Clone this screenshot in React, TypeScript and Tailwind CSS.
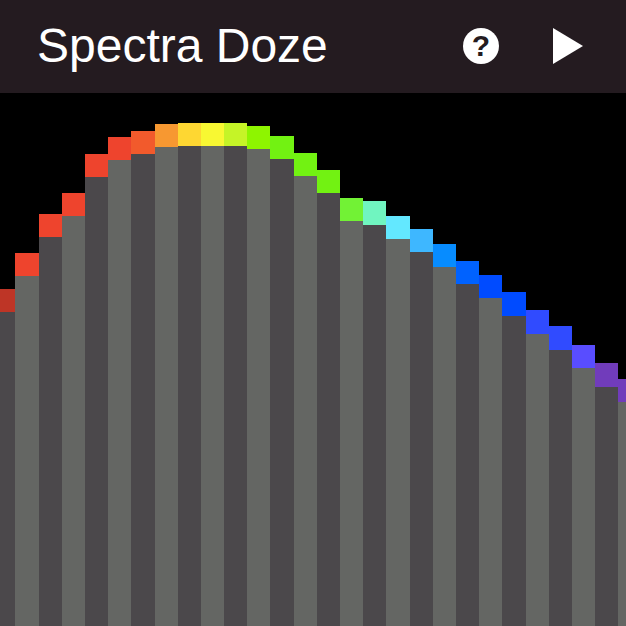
type Bar = { span: number; level: number; cap: number; color: string };

// Full height of the chart in level units; a bar's level includes its cap.
const MAX_LEVEL = 533;

const bars: Bar[] = [
  { span: 15, level: 337, cap: 23, color: "#be3526" },
  { span: 24, level: 373, cap: 23, color: "#ee442d" },
  { span: 23, level: 412, cap: 23, color: "#ee442d" },
  { span: 23, level: 433, cap: 23, color: "#ee442d" },
  { span: 23, level: 472, cap: 23, color: "#ee442d" },
  { span: 23, level: 489, cap: 23, color: "#ee442d" },
  { span: 24, level: 495, cap: 23, color: "#f25a2c" },
  { span: 23, level: 502, cap: 23, color: "#f79831" },
  { span: 23, level: 503, cap: 23, color: "#fed732" },
  { span: 23, level: 503, cap: 23, color: "#f8f832" },
  { span: 23, level: 503, cap: 23, color: "#c5f427" },
  { span: 23, level: 500, cap: 23, color: "#8ef500" },
  { span: 24, level: 490, cap: 23, color: "#72f212" },
  { span: 23, level: 473, cap: 23, color: "#72f212" },
  { span: 23, level: 456, cap: 23, color: "#72f212" },
  { span: 23, level: 428, cap: 23, color: "#72f235" },
  { span: 23, level: 425, cap: 24, color: "#70f5c0" },
  { span: 24, level: 410, cap: 23, color: "#63e8ff" },
  { span: 23, level: 397, cap: 23, color: "#3eb7ff" },
  { span: 23, level: 382, cap: 23, color: "#078cff" },
  { span: 23, level: 365, cap: 23, color: "#0062ff" },
  { span: 23, level: 351, cap: 23, color: "#004bff" },
  { span: 24, level: 334, cap: 24, color: "#004bff" },
  { span: 23, level: 316, cap: 24, color: "#304bff" },
  { span: 23, level: 300, cap: 24, color: "#304bff" },
  { span: 23, level: 281, cap: 23, color: "#594dff" },
  { span: 23, level: 263, cap: 24, color: "#713cbb" },
  { span: 8, level: 247, cap: 23, color: "#713cbb" },
];

function Header() {
  return (
    <header className="flex h-[93px] shrink-0 items-center bg-[#241b20] pr-[38px] pb-0.5 pl-[37px] text-white">
      <h1 className="flex-1 text-5xl whitespace-nowrap">Spectra Doze</h1>
      <div className="flex items-center gap-[47px]">
        <button type="button" aria-label="Help" className="flex size-10 items-center justify-center">
          <span className="flex size-9 items-center justify-center rounded-full bg-white text-3xl font-bold text-[#241b20]">
            ?
          </span>
        </button>
        <button type="button" aria-label="Play" className="flex size-10 items-center justify-center">
          <svg viewBox="0 0 30 36" className="h-9 w-[30px]" fill="currentColor" aria-hidden="true">
            <path d="M0 0 30 18 0 36Z" />
          </svg>
        </button>
      </div>
    </header>
  );
}

function Spectrum() {
  return (
    <main className="flex min-h-0 flex-1 bg-black">
      {bars.map((bar, i) => (
        <div key={i} className="flex min-w-0 basis-0 flex-col" style={{ flexGrow: bar.span }}>
          <div className="basis-0" style={{ flexGrow: MAX_LEVEL - bar.level }} />
          <div
            className={`flex basis-0 flex-col ${i % 2 === 0 ? "bg-[#4b484b]" : "bg-[#646663]"}`}
            style={{ flexGrow: bar.level }}
          >
            <div style={{ height: bar.cap, backgroundColor: bar.color }} />
          </div>
        </div>
      ))}
    </main>
  );
}

export default function App() {
  return (
    <div className="flex h-screen flex-col overflow-hidden bg-black font-['Liberation_Sans',Arial,sans-serif]">
      <Header />
      <Spectrum />
    </div>
  );
}
